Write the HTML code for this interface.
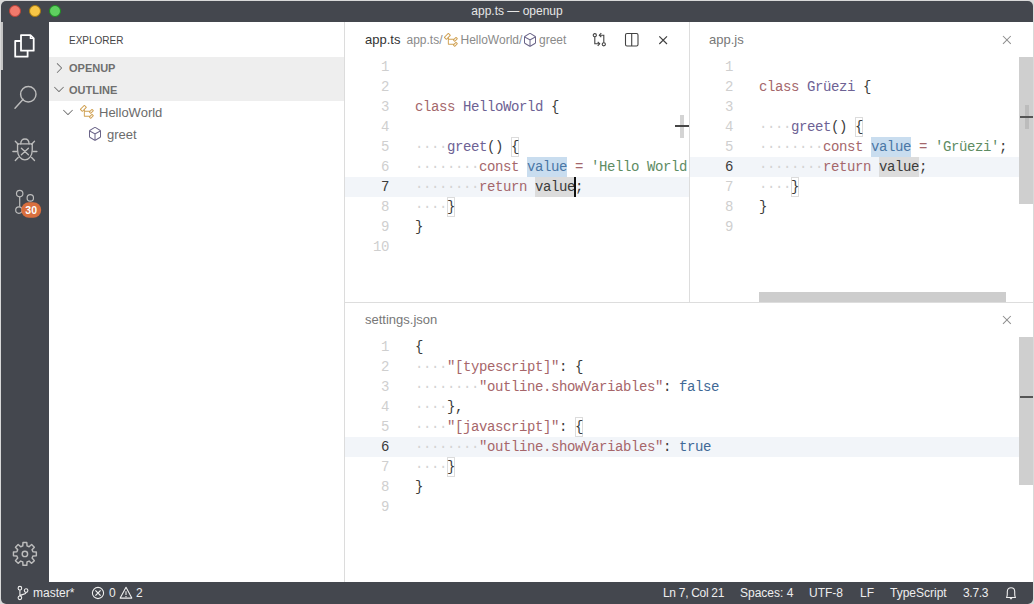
<!DOCTYPE html>
<html><head><meta charset="utf-8">
<style>
*{margin:0;padding:0;box-sizing:border-box}
html,body{width:1034px;height:604px;overflow:hidden;background:#d9d9d9;font-family:"Liberation Sans",sans-serif}
.abs{position:absolute}
#win{position:absolute;left:1px;top:1px;width:1032px;height:603px;border-radius:5px;overflow:hidden;background:#fff}
#title{left:0;top:0;width:1032px;height:21px;background:#44474e;color:#e6e6e6;font-size:12px;text-align:center;line-height:21px}
.tl{position:absolute;top:4px;width:12px;height:12px;border-radius:50%}
#act{left:0;top:21px;width:48px;height:560px;background:#44474e}
#side{left:48px;top:21px;width:295px;height:560px;background:#fff}
#status{left:0;top:581px;width:1032px;height:22px;background:#44474e;color:#eeeeee;font-size:12px;line-height:22px}
.sec{position:absolute;left:0;width:295px;height:22px;background:#eeeeee;color:#6f6f6f;font-weight:bold;font-size:11px;line-height:22px}
.tree{position:absolute;color:#6b6b6b;font-size:13px;line-height:22px}
.ed{position:absolute;background:#fff;overflow:hidden}
.ttl{position:absolute;top:0;height:35px;line-height:35px;font-size:13px;color:#777}
.code{position:absolute;font-family:"Liberation Mono",monospace;font-size:14px;letter-spacing:-0.404px;line-height:20px;white-space:pre;color:#3b3b3b}
.ln{position:absolute;font-family:"Liberation Mono",monospace;font-size:14px;letter-spacing:-0.404px;line-height:20px;color:#cfcfcf;text-align:right;white-space:pre}
.ln b{color:#3b3b3b;font-weight:normal}
.cur{position:absolute;background:#f2f5f9}
.kw{color:#a4676b}
.cls{color:#6d6294}
.str{color:#5e8c63}
.jstr{color:#a6666a}
.num{color:#3f6996}
.dot{color:#d4d4d4}
.vb{color:#4a77a6}
.hl{position:absolute;background:#c9ddef;height:20px}
.hl2{position:absolute;background:#dcdcdc;height:20px}
.bm{position:absolute;border:1px solid #dcdcdc;height:20px}
.ico{position:absolute}
</style></head><body>
<div id="win">

<div id="title" class="abs">app.ts — openup
  <div class="tl" style="left:8px;background:#f27a6c;border:1px solid #b8433a"></div>
  <div class="tl" style="left:28px;background:#f8c646;border:1px solid #a87a10"></div>
  <div class="tl" style="left:48px;background:#5fd060;border:1px solid #1e8a22"></div>
</div>

<div id="act" class="abs">
  <div class="abs" style="left:0;top:0;width:2px;height:48px;background:#c4c4c4"></div>
  <!-- explorer -->
  <svg class="ico" style="left:0;top:0" width="48" height="48" viewBox="0 0 48 48">
    <g fill="none" stroke="#fff" stroke-width="1.8" stroke-linejoin="round">
      <path d="M20 19 H14.2 V34.7 H26.6 V28.7"/>
      <path d="M20 13.1 H29.4 L32.7 16.4 V28.7 H20 Z"/>
      <path d="M29.4 13.1 V16.4 H32.7" stroke-width="1.4"/>
    </g>
  </svg>
  <!-- search -->
  <svg class="ico" style="left:0;top:52px" width="48" height="52" viewBox="0 0 48 52">
    <g fill="none" stroke="#bcbcbc" stroke-width="1.45">
      <circle cx="27.3" cy="20.2" r="7.7"/>
      <path d="M22.2 25.3 L14 34.2" stroke-linecap="round"/>
    </g>
  </svg>
  <!-- debug -->
  <svg class="ico" style="left:0;top:104px" width="48" height="52" viewBox="0 0 48 52">
    <g fill="none" stroke="#bcbcbc" stroke-width="1.35" stroke-linecap="round">
      <path d="M19.75 17.9 C19.75 14.5 21.5 12.95 23.9 12.95 C26.3 12.95 28.05 14.5 28.05 17.9"/>
      <path d="M16.55 17.9 H31.25 V24 C31.25 29.8 28 33.85 23.9 33.85 C19.8 33.85 16.55 29.8 16.55 24 Z"/>
      <path d="M14.3 15.3 L17.2 18.2 M33.5 15.3 L30.6 18.2 M11.9 25.5 H15.9 M35.9 25.5 H31.9 M14.3 34.5 L17.2 31.5 M33.5 34.5 L30.6 31.5"/>
      <path d="M20.4 22.2 L27.4 28.8 M27.4 22.2 L20.4 28.8"/>
    </g>
  </svg>
  <!-- git -->
  <svg class="ico" style="left:0;top:156px" width="48" height="52" viewBox="0 0 48 52">
    <g fill="none" stroke="#bcbcbc" stroke-width="1.2">
      <circle cx="18.7" cy="15.6" r="3.2"/>
      <circle cx="29.3" cy="19.9" r="3.2"/>
      <circle cx="17.9" cy="32.1" r="3.2"/>
      <path d="M18.7 18.8 v10"/>
    </g>
    <rect x="20.2" y="24.2" width="20" height="15.6" rx="7.8" fill="#d96f3e"/>
    <text x="30.2" y="35.8" font-family="Liberation Sans" font-size="10.5" font-weight="bold" fill="#fff" text-anchor="middle">30</text>
  </svg>
  <!-- gear -->
  <svg class="ico" style="left:0;top:508px" width="48" height="52" viewBox="0 0 48 52">
    <g fill="none" stroke="#bcbcbc" stroke-width="1.45" stroke-linejoin="round">
      <path d="M21.77 15.88 L22.00 12.46 L25.80 12.46 L26.03 15.88 L28.07 16.72 L30.64 14.46 L33.34 17.16 L31.08 19.73 L31.92 21.77 L35.34 22.00 L35.34 25.80 L31.92 26.03 L31.08 28.07 L33.34 30.64 L30.64 33.34 L28.07 31.08 L26.03 31.92 L25.80 35.34 L22.00 35.34 L21.77 31.92 L19.73 31.08 L17.16 33.34 L14.46 30.64 L16.72 28.07 L15.88 26.03 L12.46 25.80 L12.46 22.00 L15.88 21.77 L16.72 19.73 L14.46 17.16 L17.16 14.46 L19.73 16.72 Z"/>
      <circle cx="23.9" cy="23.9" r="2.7"/>
    </g>
  </svg>
</div>

<div id="side" class="abs">
  <div class="abs" style="left:20px;top:0;height:37px;line-height:37px;font-size:10px;color:#464646">EXPLORER</div>
  <div class="sec" style="top:35px"><span style="padding-left:20px">OPENUP</span>
    <svg class="ico" style="left:1.6px;top:3.25px" width="16" height="16" viewBox="0 0 16 16"><path fill="#707070" d="M10.072 8.024L5.715 3.667l.618-.62L11 7.716v.618L6.333 13l-.618-.619 4.357-4.357z"/></svg>
  </div>
  <div class="sec" style="top:57px"><span style="padding-left:20px">OUTLINE</span>
    <svg class="ico" style="left:1.6px;top:2.4px" width="16" height="16" viewBox="0 0 16 16"><path fill="#707070" d="M7.976 10.072l4.357-4.357.62.618L8.284 11h-.618L3 6.333l.619-.618 4.357 4.357z"/></svg>
  </div>
  <svg class="ico" style="left:11.2px;top:82px" width="16" height="16" viewBox="0 0 16 16"><path fill="#707070" d="M7.976 10.072l4.357-4.357.62.618L8.284 11h-.618L3 6.333l.619-.618 4.357 4.357z"/></svg>
  <svg class="ico" style="left:30px;top:82px" width="16" height="16" viewBox="0 0 16 16"><path fill="#d0a152" d="M11.34 9.71h.71l2.67-2.67v-.71L13.38 5h-.7l-1.82 1.81h-5V5.56l1.86-1.85V3l-2-2H5L1 5v.71l2 2h.71l1.14-1.15v5.79l.5.5H10v.52l1.33 1.34h.71l2.67-2.67v-.71L13.37 10h-.7l-1.86 1.85h-5v-4H10v.48l1.34 1.38zm1.69-3.65l.63.63-2 2-.63-.63 2-2zm0 5l.63.63-2 2-.63-.63 2-2zM3.35 6.65L2.06 5.36l3.3-3.3 1.29 1.3-3.3 3.29z"/></svg>
  <div class="tree" style="left:50px;top:80px">HelloWorld</div>
  <svg class="ico" style="left:37.9px;top:103.9px" width="16" height="16" viewBox="0 0 16 16"><path fill="#6a6488" fill-rule="evenodd" d="M13.51 4l-5-3h-1l-5 3-.49.86v6l.49.85 5 3h1l5-3 .49-.85v-6L13.51 4zm-6 9.56l-4.5-2.7V5.7l4.5 2.45v5.41zM3.27 4.7l4.74-2.84 4.74 2.84-4.74 2.59L3.27 4.7zm9.74 6.16l-4.5 2.7V8.15l4.5-2.45v5.16z"/></svg>
  <div class="tree" style="left:58px;top:102px">greet</div>
  <div class="abs" style="left:295px;top:0;width:1px;height:560px;background:#dcdcdc"></div>
</div>

<!-- left editor -->
<div class="ed" style="left:344px;top:21px;width:344px;height:280px">
  <div class="ttl" style="left:20px;color:#333">app.ts</div>
  <div class="ttl" style="left:61.5px;top:1px;color:#8a8a8a;font-size:12px">app.ts/</div>
  <svg class="ico" style="left:98.2px;top:10px" width="16" height="16" viewBox="0 0 16 16"><path fill="#d0a152" d="M11.34 9.71h.71l2.67-2.67v-.71L13.38 5h-.7l-1.82 1.81h-5V5.56l1.86-1.85V3l-2-2H5L1 5v.71l2 2h.71l1.14-1.15v5.79l.5.5H10v.52l1.33 1.34h.71l2.67-2.67v-.71L13.37 10h-.7l-1.86 1.85h-5v-4H10v.48l1.34 1.38zm1.69-3.65l.63.63-2 2-.63-.63 2-2zm0 5l.63.63-2 2-.63-.63 2-2zM3.35 6.65L2.06 5.36l3.3-3.3 1.29 1.3-3.3 3.29z"/></svg>
  <div class="ttl" style="left:115.5px;top:1px;color:#8a8a8a;font-size:12px">HelloWorld/</div>
  <svg class="ico" style="left:177px;top:9.75px" width="16" height="16" viewBox="0 0 16 16"><path fill="#6a6488" fill-rule="evenodd" d="M13.51 4l-5-3h-1l-5 3-.49.86v6l.49.85 5 3h1l5-3 .49-.85v-6L13.51 4zm-6 9.56l-4.5-2.7V5.7l4.5 2.45v5.41zM3.27 4.7l4.74-2.84 4.74 2.84-4.74 2.59L3.27 4.7zm9.74 6.16l-4.5 2.7V8.15l4.5-2.45v5.16z"/></svg>
  <div class="ttl" style="left:194px;top:1px;color:#8a8a8a;font-size:12px">greet</div>
  <!-- actions -->
  <svg class="ico" style="left:239px;top:7px" width="100" height="20" viewBox="0 0 100 20">
    <g fill="none" stroke="#424242" stroke-width="1.1">
      <g transform="translate(0.5 0)"><circle cx="10.3" cy="6.2" r="1.6"/>
      <path d="M10.3 7.8 V14.8 H15"/>
      <path d="M13.2 12.8 L15.2 14.8 L13.2 16.8"/>
      <circle cx="19.3" cy="15.3" r="1.6"/>
      <path d="M19.3 13.7 V6.2 H15"/>
      <path d="M16.8 4.2 L14.8 6.2 L16.8 8.2"/></g>
      <rect x="41.5" y="4.5" width="12.5" height="12.5" rx="1.5"/>
      <path d="M47.7 4.5 V17"/>
      <path d="M75.3 7.3 L83 15 M83 7.3 L75.3 15" stroke-width="1.2"/>
    </g>
  </svg>
  <div class="cur" style="left:0;top:155px;width:344px;height:20px"></div>
  <div class="hl" style="left:182px;top:135px;width:40px"></div>
  <div class="hl2" style="left:190px;top:155px;width:40px"></div>
  <div class="bm" style="left:166px;top:115px;width:8px"></div>
  <div class="bm" style="left:102px;top:175px;width:8px"></div>
  <div class="ln" style="left:0;top:35px;width:44px">1
2
3
4
5
6
<b>7</b>
8
9
10</div>
  <div class="code" style="left:70px;top:35px">

<span class="kw">class</span> <span class="cls">HelloWorld</span> {

<span class="dot">····</span><span class="cls">greet</span>() {
<span class="dot">········</span><span class="kw">const</span> <span class="vb">value</span> <span class="kw">=</span> <span class="str">'Hello World'</span>
<span class="dot">········</span><span class="kw">return</span> value;
<span class="dot">····</span>}
}
</div>
  <div class="abs" style="left:229px;top:155px;width:2px;height:20px;background:#111"></div>
  <div class="abs" style="left:335.3px;top:92.5px;width:4px;height:23px;background:#d4d4d4"></div>
  <div class="abs" style="left:330.3px;top:102.8px;width:14px;height:2px;background:#454545"></div>
</div>

<!-- right editor -->
<div class="ed" style="left:688px;top:21px;width:344px;height:280px">
  <div class="ttl" style="left:20px;color:#777">app.js</div>
  <svg class="ico" style="left:313.2px;top:13.2px" width="10" height="10" viewBox="0 0 10 10"><path d="M1 1 L8.8 8.8 M8.8 1 L1 8.8" stroke="#8e8e8e" stroke-width="1.05"/></svg>
  <div class="cur" style="left:0;top:135px;width:330px;height:20px"></div>
  <div class="hl" style="left:182px;top:115px;width:40px"></div>
  <div class="hl2" style="left:190px;top:135px;width:40px"></div>
  <div class="bm" style="left:166px;top:95px;width:8px"></div>
  <div class="bm" style="left:102px;top:155px;width:8px"></div>
  <div class="ln" style="left:0;top:35px;width:44px">1
2
3
4
5
<b>6</b>
7
8
9</div>
  <div class="code" style="left:70px;top:35px">
<span class="kw">class</span> <span class="cls">Grüezi</span> {

<span class="dot">····</span><span class="cls">greet</span>() {
<span class="dot">········</span><span class="kw">const</span> <span class="vb">value</span> <span class="kw">=</span> <span class="str">'Grüezi'</span>;
<span class="dot">········</span><span class="kw">return</span> value;
<span class="dot">····</span>}
}
</div>
  <div class="abs" style="left:330px;top:35px;width:15px;height:147px;background:#cfcfcf"></div>
  <div class="abs" style="left:335.5px;top:82.6px;width:4.6px;height:24.6px;background:#bcbcbc"></div>
  <div class="abs" style="left:330.8px;top:93.6px;width:13.4px;height:2.2px;background:#555"></div>
  <div class="abs" style="left:70.3px;top:270.2px;width:246.5px;height:10px;background:#cdcdcd"></div>
</div>
<div class="abs" style="left:688px;top:21px;width:1px;height:281px;background:#dddddd"></div>

<!-- bottom editor -->
<div class="ed" style="left:344px;top:301px;width:688px;height:280px">
  <div class="ttl" style="left:20px;color:#777">settings.json</div>
  <svg class="ico" style="left:657.3px;top:13.4px" width="10" height="10" viewBox="0 0 10 10"><path d="M1 1 L8.8 8.8 M8.8 1 L1 8.8" stroke="#8e8e8e" stroke-width="1.05"/></svg>
  <div class="cur" style="left:0;top:135px;width:674px;height:20px"></div>
  <div class="bm" style="left:230px;top:115px;width:8px"></div>
  <div class="bm" style="left:102px;top:155px;width:8px"></div>
  <div class="ln" style="left:0;top:35px;width:44px">1
2
3
4
5
<b>6</b>
7
8
9</div>
  <div class="code" style="left:70px;top:35px">{
<span class="dot">····</span><span class="jstr">"[typescript]"</span>: {
<span class="dot">········</span><span class="jstr">"outline.showVariables"</span>: <span class="num">false</span>
<span class="dot">····</span>},
<span class="dot">····</span><span class="jstr">"[javascript]"</span>: {
<span class="dot">········</span><span class="jstr">"outline.showVariables"</span>: <span class="num">true</span>
<span class="dot">····</span>}
}
</div>
  <div class="abs" style="left:674.2px;top:34.5px;width:15px;height:148.5px;background:#cfcfcf"></div>
  <div class="abs" style="left:675px;top:93.6px;width:13.4px;height:2.2px;background:#555"></div>
</div>
<div class="abs" style="left:344px;top:301px;width:689px;height:1px;background:#dddddd"></div>

<div id="status" class="abs">
  <svg class="ico" style="left:14px;top:3px" width="16" height="16" viewBox="0 0 16 16">
    <g fill="none" stroke="#eee" stroke-width="1.1">
      <circle cx="4.9" cy="3.2" r="1.8"/>
      <circle cx="4.9" cy="12.8" r="1.8"/>
      <circle cx="11.1" cy="5.6" r="1.8"/>
      <path d="M4.9 5 V11 M11.1 7.4 C11.1 9.6 6 9 4.9 11"/>
    </g>
  </svg>
  <span class="abs" style="left:32px">master*</span>
  <svg class="ico" style="left:89px;top:3px" width="16" height="16" viewBox="0 0 16 16">
    <g fill="none" stroke="#eee" stroke-width="1.1">
      <circle cx="8" cy="8" r="5.6"/>
      <path d="M5.4 5.4 L10.6 10.6 M10.6 5.4 L5.4 10.6" stroke-width="1.3"/>
    </g>
  </svg>
  <span class="abs" style="left:108px">0</span>
  <svg class="ico" style="left:117px;top:3px" width="16" height="16" viewBox="0 0 16 16">
    <g fill="none" stroke="#eee" stroke-width="1.1" stroke-linejoin="round">
      <path d="M8 2.3 L13.8 13.1 H2.2 Z"/>
      <path d="M8 6.3 V10 M8 11 V12.2"/>
    </g>
  </svg>
  <span class="abs" style="left:135px">2</span>
  <span class="abs" style="left:662px;letter-spacing:-0.3px">Ln 7, Col 21</span>
  <span class="abs" style="left:739px">Spaces: 4</span>
  <span class="abs" style="left:808px">UTF-8</span>
  <span class="abs" style="left:859px">LF</span>
  <span class="abs" style="left:889px">TypeScript</span>
  <span class="abs" style="left:962px;letter-spacing:-0.3px">3.7.3</span>
  <svg class="ico" style="left:1002.3px;top:3px" width="16" height="16" viewBox="0 0 16 16">
    <g fill="none" stroke="#eee" stroke-width="1.1" stroke-linejoin="round">
      <path d="M3.5 12.5 C4.3 11.5 4.3 10.5 4.3 9 V6.5 C4.3 4 6 2.8 8 2.8 C10 2.8 11.7 4 11.7 6.5 V9 C11.7 10.5 11.7 11.5 12.5 12.5 Z"/>
      <path d="M6.8 12.5 L8 14 L9.2 12.5"/>
    </g>
  </svg>
</div>

</div>
</body></html>
